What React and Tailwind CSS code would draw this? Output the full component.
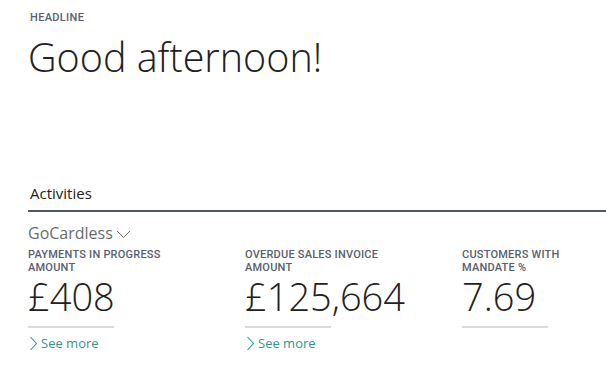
const tiles = [
  { label: ['PAYMENTS IN PROGRESS', 'AMOUNT'], value: '£408', more: true },
  { label: ['OVERDUE SALES INVOICE', 'AMOUNT'], value: '£125,664', more: true },
  { label: ['CUSTOMERS WITH', 'MANDATE %'], value: '7.69', more: false },
]

function Tile({ tile }) {
  return (
    <div className="w-[217px] shrink-0">
      <div className="font-['Roboto',sans-serif] text-[11px] font-medium leading-[13px] tracking-[0.02em] text-[#56606f]">
        {tile.label.map((l) => (
          <div key={l}>{l}</div>
        ))}
      </div>
      <div className="mt-[2px] font-['Open_Sans',sans-serif] text-[38px] font-light leading-[40px] text-[#212121]">{tile.value}</div>
      <div className="mt-[10px] h-[2px] w-[86px] bg-[#dadada]" />
      {tile.more && (
        <a className="mt-[6px] flex items-center gap-[3px] font-['Open_Sans',sans-serif] text-[13px] leading-[18px] text-[#31958f]">
          <svg width="9" height="15" viewBox="0 0 9 15" className="ml-[1px]">
            <polyline points="1.5,1 7.5,7.5 1.5,14" fill="none" stroke="currentColor" strokeWidth="1.1" />
          </svg>
          See more
        </a>
      )}
    </div>
  )
}

export default function App() {
  return (
    <div className="h-[380px] w-[606px] overflow-hidden bg-white pl-[28px] pt-[10px]">
      <div className="pl-[2px] font-['Roboto',sans-serif] text-[11px] font-medium leading-[16px] tracking-[0.03em] text-[#56606f]">HEADLINE</div>
      <h1 className="mt-[7px] font-['Open_Sans',sans-serif] text-[39.5px] font-light leading-[48px] text-[#212121]">Good afternoon!</h1>

      <div className="mt-[102px] border-b-2 border-[#4f5666] pb-[7px] pl-[2px] font-['Open_Sans',sans-serif] text-[15px] leading-[20px] text-[#212121]">
        Activities
      </div>

      <div className="mt-[11px] flex items-center font-['Open_Sans',sans-serif] text-[16px] leading-[20px] text-[#6b6b6b]">
        GoCardless
        <svg width="15" height="9" viewBox="0 0 15 9" className="ml-[3px] mt-[2px]">
          <polyline points="1,1 7.5,7.5 14,1" fill="none" stroke="currentColor" strokeWidth="1" />
        </svg>
      </div>

      <div className="mt-[5px] flex">
        {tiles.map((t) => (
          <Tile key={t.value} tile={t} />
        ))}
      </div>
    </div>
  )
}
